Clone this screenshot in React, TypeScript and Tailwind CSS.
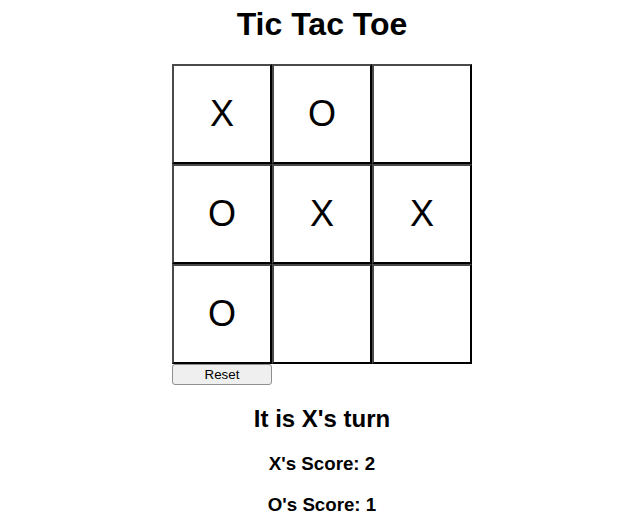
import { useState } from "react";

type Mark = "X" | "O" | null;

const START: Mark[] = ["X", "O", null, "O", "X", "X", "O", null, null];

export default function App() {
  const [board, setBoard] = useState<Mark[]>(START);
  const [turn, setTurn] = useState<"X" | "O">("X");
  const [scores] = useState({ X: 2, O: 1 });

  function play(i: number) {
    if (board[i]) return;
    const next = board.slice();
    next[i] = turn;
    setBoard(next);
    setTurn(turn === "X" ? "O" : "X");
  }

  function reset() {
    setBoard(Array(9).fill(null));
    setTurn("X");
  }

  return (
    <div className="flex flex-col items-center pl-2 text-black font-['Liberation_Sans',Arial,sans-serif]">
      <h1 className="mt-[6px] mb-[21px] text-[32px] leading-[37px] font-bold">Tic Tac Toe</h1>
      <div className="flex w-[300px] flex-col items-start">
        <div className="grid grid-cols-3">
          {board.map((m, i) => (
            <button
              key={i}
              onClick={() => play(i)}
              className="flex h-[100px] w-[100px] items-center justify-center border-2 border-t-[#4a4a4a] border-l-[#4a4a4a] border-r-black border-b-black bg-white text-[36px] leading-none"
            >
              {m}
            </button>
          ))}
        </div>
        <button
          onClick={reset}
          className="h-[21px] w-[100px] rounded-[3px] border border-[#8f8f8f] bg-[#efefef] text-[13.33px] leading-[19px]"
        >
          Reset
        </button>
      </div>
      <h2 className="mt-[20px] text-[24px] leading-[28px] font-bold">It is {turn}'s turn</h2>
      <h3 className="mt-[20px] text-[18.72px] leading-[21.5px] font-bold">X's Score: {scores.X}</h3>
      <h3 className="mt-[19px] text-[18.72px] leading-[21.5px] font-bold">O's Score: {scores.O}</h3>
    </div>
  );
}
